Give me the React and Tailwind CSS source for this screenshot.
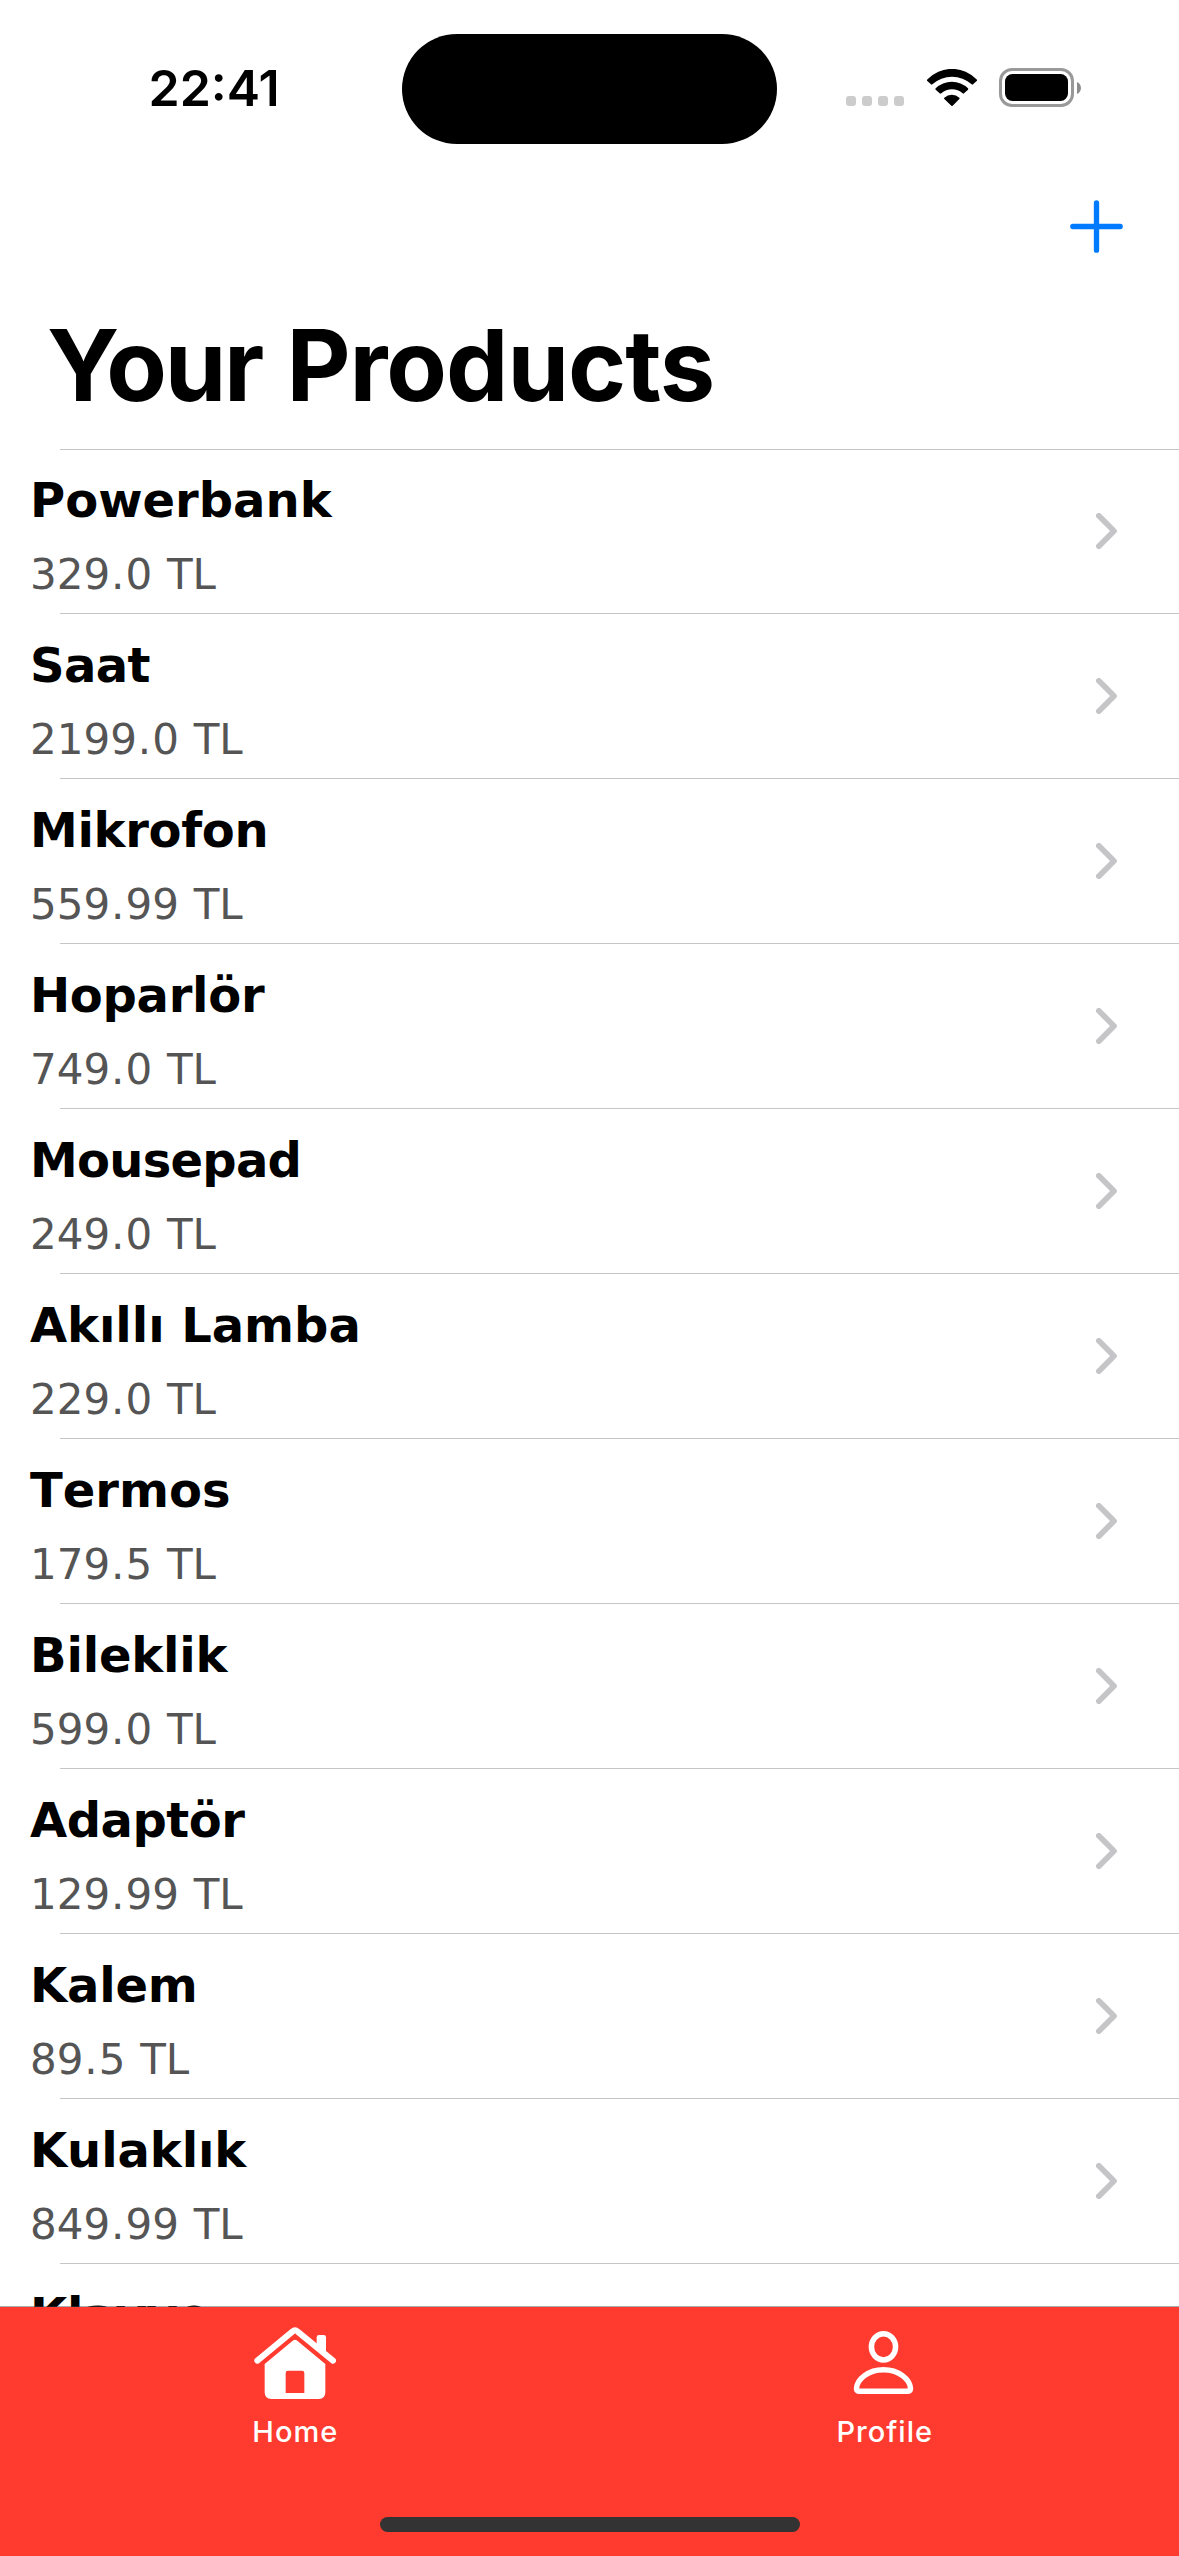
const products = [
  { name: "Powerbank", price: "329.0", tracking: "tracking-normal" },
  { name: "Saat", price: "2199.0", tracking: "tracking-[-0.6px]" },
  { name: "Mikrofon", price: "559.99", tracking: "tracking-[-0.3px]" },
  { name: "Hoparlör", price: "749.0", tracking: "tracking-[-0.3px]" },
  { name: "Mousepad", price: "249.0", tracking: "tracking-[-0.75px]" },
  { name: "Akıllı Lamba", price: "229.0", tracking: "tracking-[-0.05px]" },
  { name: "Termos", price: "179.5", tracking: "tracking-normal" },
  { name: "Bileklik", price: "599.0", tracking: "tracking-[-0.2px]" },
  { name: "Adaptör", price: "129.99", tracking: "tracking-[-0.5px]" },
  { name: "Kalem", price: "89.5", tracking: "tracking-[-0.2px]" },
  { name: "Kulaklık", price: "849.99", tracking: "tracking-[-0.1px]" },
  { name: "Klavye", price: "449.0", tracking: "tracking-[-0.2px]" },
];

function WifiIcon() {
  return (
    <svg className="h-[37px] w-[50px]" viewBox="440 147 150 111" fill="black">
      <path d="M440 179A103 103 0 0 1 590 179Q591 180 590 182L578 193Q576 195 574 193A88 88 0 0 0 456 193Q454 195 452 193L440 182Q439 180 440 179Z" />
      <path d="M466 205A70 70 0 0 1 563 205Q565 207 563 209L551 220Q549 222 547 220A48 48 0 0 0 483 220Q480 222 478 220L466 209Q464 207 466 205Z" />
      <path d="M492 233A33 33 0 0 1 537 233Q539 235 537 237L517 257Q515 259 513 257L492 237Q490 235 492 233Z" />
    </svg>
  );
}

function BatteryIcon() {
  return (
    <div className="flex items-center">
      <div className="h-[39px] w-[75px] rounded-[13px] border-[3px] border-[#999999] p-[3px]">
        <div className="h-full w-full rounded-[7.5px] bg-black" />
      </div>
      <svg className="ml-[3px] h-3 w-1" viewBox="0 0 4 12" fill="#8c8c8c">
        <path d="M0 0C5.3 2.2 5.3 9.8 0 12Z" />
      </svg>
    </div>
  );
}

function StatusBar() {
  return (
    <header className="flex h-[177px] shrink-0 items-start">
      <div className="w-[402px] pt-[58px] pl-[148.5px] text-[50px] leading-[60px] font-semibold">
        22:41
      </div>
      <div className="mt-[34px] h-[110px] w-[375px] rounded-full bg-black" />
      <div className="mt-[68px] ml-[69px] flex h-[39px] items-end">
        <div className="mb-px flex gap-[6px]">
          <span className="size-[10px] rounded-[3px] bg-[#cccccc]" />
          <span className="size-[10px] rounded-[3px] bg-[#cccccc]" />
          <span className="size-[10px] rounded-[3px] bg-[#cccccc]" />
          <span className="size-[10px] rounded-[3px] bg-[#cccccc]" />
        </div>
        <div className="mr-[22.3px] mb-px ml-[22.7px]">
          <WifiIcon />
        </div>
        <BatteryIcon />
      </div>
    </header>
  );
}

function ProductRow({ name, price, tracking }) {
  const [whole, fraction] = price.split(".");
  return (
    <li>
      <div className="flex h-[164px] items-center justify-between pr-[62px] pl-[30px]">
        <div className="flex flex-col gap-[22px] self-start pt-[23px] font-['DejaVu_Sans',sans-serif] whitespace-nowrap [font-kerning:none]">
          <h2 className={`text-[48px] leading-[56px] font-bold ${tracking}`}>{name}</h2>
          <p className="text-[42px] leading-[49px] text-[#555555] [word-spacing:1.4px]">
            {whole}
            <span className="mr-[1px] ml-[0.9px]">.</span>
            {fraction} TL
          </p>
        </div>
        <svg
          className="h-[36px] w-[21px]"
          viewBox="288 249 63 108"
          fill="none"
          stroke="#c5c5c7"
          strokeWidth="17"
          strokeLinecap="round"
          strokeLinejoin="round"
        >
          <path d="M296.5 257.5L342 303L296.5 348.5" />
        </svg>
      </div>
      <div className="ml-[60px] h-px bg-[#c6c6c8]" />
    </li>
  );
}

function HomeIcon() {
  return (
    <svg className="h-[72px] w-[82px]" viewBox="761 321 246 216" fill="white">
      <path
        d="M771 422L876 335Q884 327.500 892 335L998 422"
        fill="none"
        stroke="white"
        strokeWidth="18"
        strokeLinecap="round"
      />
      <path d="M949 352Q949 345 956 345H970Q977 345 977 352V400L949 376Z" />
      <path
        fillRule="evenodd"
        d="M793 432L879 361Q884 357 889 361L975 432V517Q975 537 955 537H813Q793 537 793 517ZM856 519H912V459Q912 452 905 452H863Q856 452 856 459Z"
      />
    </svg>
  );
}

function PersonIcon() {
  return (
    <svg
      className="h-[72px] w-[82px]"
      viewBox="190 141 246 216"
      fill="none"
      stroke="white"
      strokeWidth="16.5"
    >
      <ellipse cx="311.5" cy="200.500" rx="36.300" ry="39.500" />
      <path d="M230.500 325C232 298 266 269 311.500 269S391 298 392.500 325Q392.500 334 383 334H240Q230.500 334 230.500 325Z" />
    </svg>
  );
}

function Tab({ icon, label }) {
  return (
    <div className="flex flex-1 flex-col items-center gap-[15px] pt-[20px]">
      {icon}
      <span className="pl-px text-[29px] leading-[35px] font-medium tracking-[1px]">{label}</span>
    </div>
  );
}

export default function App() {
  return (
    <div className="flex h-[2556px] w-[1179px] flex-col overflow-hidden bg-white font-['Inter',sans-serif] text-black">
      <StatusBar />
      <div className="flex h-[128px] shrink-0 justify-end pt-[23px] pr-[56px]">
        <svg
          className="size-[53px]"
          viewBox="869.500 540.500 159 159"
          fill="none"
          stroke="#007aff"
          strokeWidth="16"
          strokeLinecap="round"
        >
          <path d="M878 620H1020M949 549V691" />
        </svg>
      </div>
      <h1 className="h-[144px] shrink-0 pl-[47px] text-[99px] leading-[120px] font-bold tracking-[-1.05px]">
        <span className="mr-[2px] tracking-[-2.3px]">Your</span> Products
      </h1>
      <main className="-mb-px min-h-0 flex-1 overflow-hidden">
        <div className="-mb-px ml-[60px] h-px bg-[#c6c6c8]" />
        <ul>
          {products.map((p) => (
            <ProductRow key={p.name} {...p} />
          ))}
        </ul>
      </main>
      <footer className="relative flex h-[250px] shrink-0 flex-col border-t border-[rgba(60,70,75,0.45)] bg-[#ff3b30] bg-clip-padding text-white">
        <nav className="flex h-[210px]">
          <Tab icon={<HomeIcon />} label="Home" />
          <Tab icon={<PersonIcon />} label="Profile" />
        </nav>
        <div className="ml-[380px] h-[15px] w-[420px] rounded-full bg-[#333333]" />
      </footer>
    </div>
  );
}
